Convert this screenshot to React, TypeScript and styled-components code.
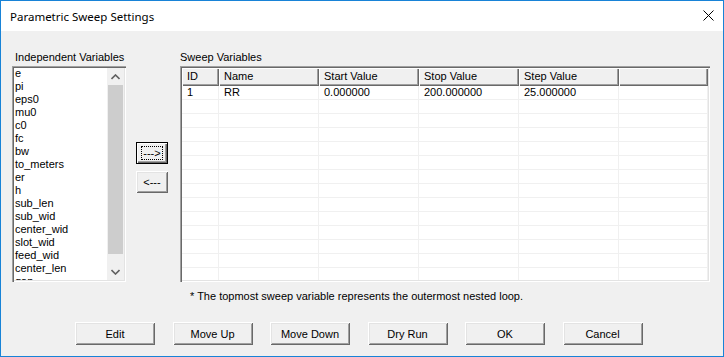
import React from 'react';
import styled, { createGlobalStyle, css } from 'styled-components';

const variables = [
  'e', 'pi', 'eps0', 'mu0', 'c0', 'fc', 'bw', 'to_meters', 'er', 'h',
  'sub_len', 'sub_wid', 'center_wid', 'slot_wid', 'feed_wid', 'center_len', 'gap',
];

const columns = [
  { title: 'ID', width: '37px' },
  { title: 'Name', width: '100px' },
  { title: 'Start Value', width: '100px' },
  { title: 'Stop Value', width: '100px' },
  { title: 'Step Value', width: '100px' },
  { title: '', width: '1fr' },
];

const sweepRows = [['1', 'RR', '0.000000', '200.000000', '25.000000', '']];

const GlobalStyle = createGlobalStyle`
  body {
    margin: 0;
    background: #ffffff;
    font-family: "Liberation Sans", Arial, sans-serif;
    font-size: 11px;
    color: #000;
  }
`;

const App: React.FC = () => {
  // pad the grid with empty rows so it fills the box
  const rows = [...sweepRows];
  while (rows.length < 14) rows.push(['', '', '', '', '', '']);

  return (
    <>
      <GlobalStyle />
      <Window>
        <TitleBar>
          <Title>Parametric Sweep Settings</Title>
          <CloseIcon width="11" height="11" viewBox="0 0 11 11">
            <path d="M0.5 0.5 L10.5 10.5 M10.5 0.5 L0.5 10.5" stroke="#000" strokeWidth="1" />
          </CloseIcon>
        </TitleBar>

        <Client>
          <TopRow>
            <LeftCol>
              <Label $indent={3}>Independent Variables</Label>
              <ListBox>
                <ListItems>
                  {variables.map(v => (
                    <ListItem key={v}>{v}</ListItem>
                  ))}
                </ListItems>
                <ScrollBar>
                  <ScrollArrow>
                    <svg width="9" height="6" viewBox="0 0 9 6">
                      <path d="M0.5 5 L4.5 1 L8.5 5" fill="none" stroke="#606060" strokeWidth="1.6" />
                    </svg>
                  </ScrollArrow>
                  <ScrollThumb />
                  <ScrollTrack />
                  <ScrollArrow>
                    <svg width="9" height="6" viewBox="0 0 9 6">
                      <path d="M0.5 1 L4.5 5 L8.5 1" fill="none" stroke="#606060" strokeWidth="1.6" />
                    </svg>
                  </ScrollArrow>
                </ScrollBar>
              </ListBox>
            </LeftCol>

            <MidCol>
              <ClassicButton $width={32} $focused>
                <FocusRect>---&gt;</FocusRect>
              </ClassicButton>
              <ClassicButton $width={32}>&lt;---</ClassicButton>
            </MidCol>

            <RightCol>
              <Label $indent={0}>Sweep Variables</Label>
              <GridBox>
                <Grid $template={columns.map(c => c.width).join(' ')}>
                  {columns.map((c, i) => (
                    <HeaderCell key={i}>{c.title}</HeaderCell>
                  ))}
                  {rows.map((row, r) =>
                    row.map((cell, i) => (
                      <BodyCell key={`${r}-${i}`}>{cell}</BodyCell>
                    ))
                  )}
                </Grid>
              </GridBox>
              <Footnote>* The topmost sweep variable represents the outermost nested loop.</Footnote>
            </RightCol>
          </TopRow>

          <ButtonRow>
            <ClassicButton $width={80} $height={23}>Edit</ClassicButton>
            <ClassicButton $width={80} $height={23}>Move Up</ClassicButton>
            <ClassicButton $width={80} $height={23}>Move Down</ClassicButton>
            <ClassicButton $width={80} $height={23}>Dry Run</ClassicButton>
            <ClassicButton $width={80} $height={23}>OK</ClassicButton>
            <ClassicButton $width={80} $height={23}>Cancel</ClassicButton>
          </ButtonRow>
        </Client>
      </Window>
    </>
  );
};

const sunken = css`
  box-shadow:
    inset 1px 1px #a0a0a0,
    inset 2px 2px #696969,
    inset -1px -1px #ffffff,
    inset -2px -2px #e3e3e3;
`;

const Window = styled.div`
  width: 724px;
  height: 357px;
  box-sizing: border-box;
  border: 1px solid #1883d7;
  display: flex;
  flex-direction: column;
  background: #f0f0f0;
  overflow: hidden;
`;

const TitleBar = styled.div`
  height: 30px;
  flex-shrink: 0;
  background: #ffffff;
  display: flex;
  align-items: center;
  justify-content: space-between;
  padding: 0 9px 0 9px;
`;

const Title = styled.div`
  font-family: "Noto Sans", "Open Sans", sans-serif;
  font-size: 11.5px;
  color: #000;
`;

const CloseIcon = styled.svg`
  display: block;
  margin-top: -1px;
`;

const Client = styled.div`
  flex: 1;
  display: flex;
  flex-direction: column;
  padding: 19px 13px 0 11px;
`;

const TopRow = styled.div`
  display: flex;
  align-items: flex-start;
`;

const LeftCol = styled.div`
  width: 114px;
  flex-shrink: 0;
`;

const Label = styled.div<{ $indent: number }>`
  height: 16px;
  line-height: 14px;
  padding-left: ${p => p.$indent}px;
  white-space: nowrap;
`;

const ListBox = styled.div`
  height: 216px;
  box-sizing: border-box;
  padding: 2px;
  background: #ffffff;
  display: flex;
  ${sunken}
`;

const ListItems = styled.div`
  flex: 1;
  overflow: hidden;
  padding-left: 1px;
`;

const ListItem = styled.div`
  height: 13px;
  line-height: 13px;
  margin-top: -1px;
  margin-bottom: 1px;
  white-space: nowrap;
`;

const ScrollBar = styled.div`
  width: 17px;
  display: flex;
  flex-direction: column;
  background: #f0f0f0;
`;

const ScrollArrow = styled.div`
  height: 17px;
  display: flex;
  align-items: center;
  justify-content: center;
`;

const ScrollThumb = styled.div`
  height: 169px;
  margin: 0 1px;
  background: #cdcdcd;
`;

const ScrollTrack = styled.div`
  flex: 1;
`;

const MidCol = styled.div`
  display: flex;
  flex-direction: column;
  gap: 7px;
  padding-top: 92px;
  margin-left: 10px;
  flex-shrink: 0;
`;

const ClassicButton = styled.div<{ $width: number; $height?: number; $focused?: boolean }>`
  width: ${p => p.$width}px;
  height: ${p => p.$height ?? 22}px;
  box-sizing: border-box;
  display: flex;
  align-items: center;
  justify-content: center;
  background: #f0f0f0;
  white-space: nowrap;
  ${p =>
    p.$focused
      ? css`
          border: 1px solid #000;
          box-shadow:
            inset 1px 1px #ffffff,
            inset -1px -1px #696969,
            inset -2px -2px #a0a0a0;
        `
      : css`
          box-shadow:
            inset 1px 1px #ffffff,
            inset -1px -1px #696969,
            inset 2px 2px #e3e3e3,
            inset -2px -2px #a0a0a0;
        `}
`;

const FocusRect = styled.div`
  width: 22px;
  height: 14px;
  box-sizing: border-box;
  border: 1px dotted #000;
  display: flex;
  align-items: center;
  justify-content: center;
  line-height: 12px;
`;

const RightCol = styled.div`
  flex: 1;
  margin-left: 12px;
  min-width: 0;
`;

const GridBox = styled.div`
  height: 216px;
  box-sizing: border-box;
  padding: 2px;
  background: #ffffff;
  overflow: hidden;
  ${sunken}
`;

const Grid = styled.div<{ $template: string }>`
  display: grid;
  grid-template-columns: ${p => p.$template};
  grid-auto-rows: 14px;
  grid-template-rows: 18px;
  height: 100%;
  overflow: hidden;
`;

const HeaderCell = styled.div`
  box-sizing: border-box;
  padding-left: 5px;
  line-height: 17px;
  white-space: nowrap;
  background: #f0f0f0;
  box-shadow:
    inset 1px 1px #ffffff,
    inset -1px -1px #696969,
    inset -2px -2px #a0a0a0;
`;

const BodyCell = styled.div`
  box-sizing: border-box;
  padding-left: 5px;
  line-height: 13px;
  white-space: nowrap;
  border-right: 1px solid #f0f0f0;
  border-bottom: 1px solid #f0f0f0;
`;

const Footnote = styled.div`
  margin-top: 7px;
  padding-left: 10px;
  line-height: 14px;
  white-space: nowrap;
`;

const ButtonRow = styled.div`
  display: flex;
  gap: 17.5px;
  margin: 19px 0 0 63px;
`;

export default App;
